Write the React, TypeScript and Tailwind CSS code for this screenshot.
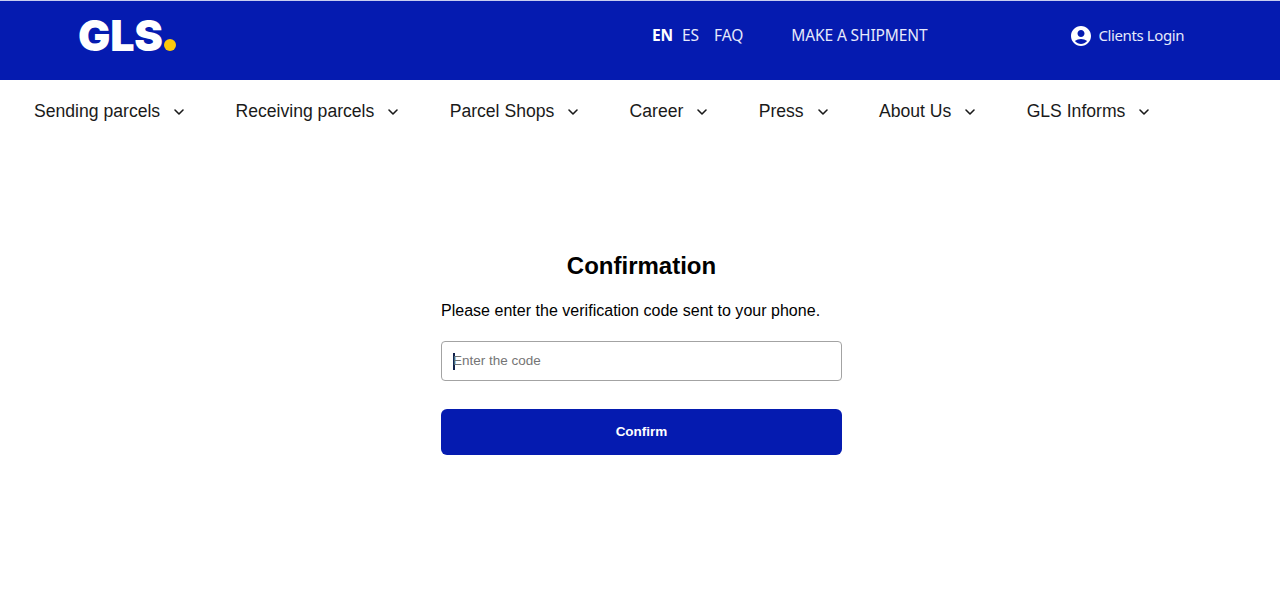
import { ChevronDown } from "lucide-react";

const NAV_ITEMS = ["Sending parcels", "Receiving parcels", "Parcel Shops", "Career", "Press", "About Us", "GLS Informs"];

function UserIcon() {
  return (
    <svg width="24" height="24" viewBox="0 0 24 24" fill="#ffffff">
      <path d="M12 2C6.48 2 2 6.48 2 12s4.48 10 10 10 10-4.48 10-10S17.52 2 12 2zm0 4c1.93 0 3.5 1.57 3.5 3.5S13.93 13 12 13s-3.5-1.57-3.5-3.5S10.07 6 12 6zm0 14c-2.03 0-4.43-.82-6.14-2.88C7.55 15.8 9.68 15 12 15s4.45.8 6.14 2.12C16.43 19.18 14.03 20 12 20z" />
    </svg>
  );
}

export default function App() {
  return (
    <div className="h-[592px] overflow-hidden bg-white font-['Liberation_Sans',sans-serif] text-black">
      <header className="flex h-20 items-center border-t border-[#c8cdf0] bg-[#051bb0] pb-[10px] font-['Noto_Sans',sans-serif] text-white">
        <div className="ml-[78px] flex w-[98px] items-baseline">
          <span className="font-['Inter',sans-serif] text-[43px] leading-none font-black tracking-[-0.2px]">GLS</span>
          <span className="ml-[1px] size-[12px] rounded-full bg-[#fdc90a]" />
        </div>
        <nav className="ml-[476px] flex items-center text-[15.5px] tracking-[-0.1px] text-[#e6e9fb]">
          <span className="font-bold text-white">EN</span>
          <span className="ml-[9px]">ES</span>
          <span className="ml-[15px]">FAQ</span>
          <span className="ml-[48px]">MAKE A SHIPMENT</span>
        </nav>
        <div className="ml-[141px] flex items-center gap-[6px] text-[15px] tracking-[-0.4px] text-[#e6e9fb]">
          <UserIcon />
          <span>Clients Login</span>
        </div>
      </header>

      <nav className="flex h-[61px] items-center gap-[48.3px] pt-[2px] pl-[34px] text-[17.6px] leading-none text-[#1a1a1a]">
        {NAV_ITEMS.map((item) => (
          <div key={item} className="flex items-center">
            <span>{item}</span>
            <ChevronDown size={16} strokeWidth={2.4} className="ml-[11px]" />
          </div>
        ))}
      </nav>

      <main className="mt-[108px] ml-[441px] w-[401px]">
        <h1 className="text-center text-2xl leading-[34px] font-bold">Confirmation</h1>
        <p className="mt-[19px] text-base leading-[18px] tracking-[0.02px]">Please enter the verification code sent to your phone.</p>
        <div className="mt-[21px] flex h-10 items-center rounded border border-[#a3a3a3] pl-[11px] text-[13.5px] text-[#757575]">
          <span className="h-[17px] w-[1.5px] bg-[#10204a]" />
          <span className="-ml-[1.5px]">Enter the code</span>
        </div>
        <button className="mt-[28px] h-[46px] w-full rounded-md bg-[#051bb0] text-[13.5px] font-bold text-white">Confirm</button>
      </main>
    </div>
  );
}
